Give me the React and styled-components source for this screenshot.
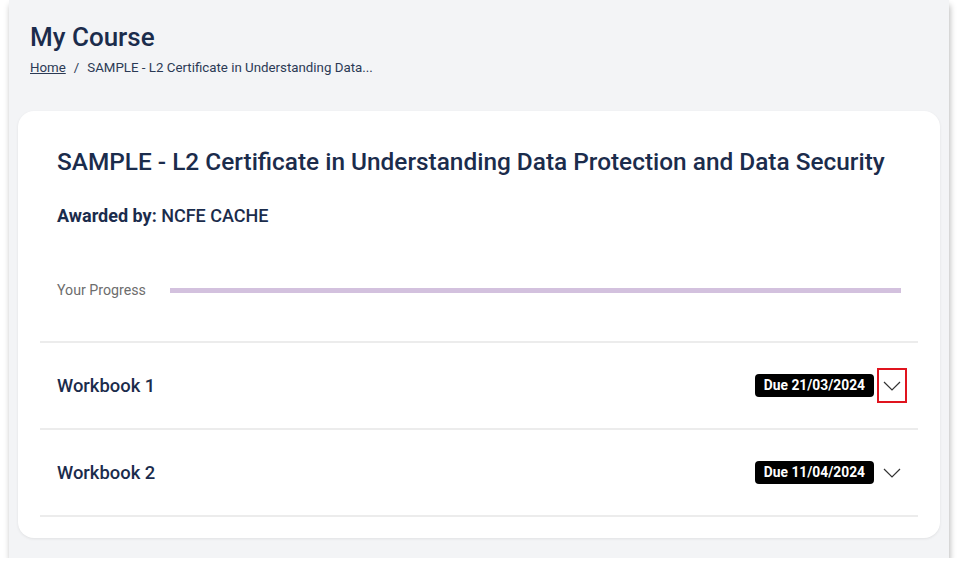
import styled, { createGlobalStyle } from "styled-components";

const Global = createGlobalStyle`
  html, body {
    margin: 0;
    padding: 0;
    background: #fff;
    font-family: Roboto, "Liberation Sans", Arial, sans-serif;
  }
`

const Frame = styled.div`
  margin-left: 9px;
  width: 940px;
  height: 558px;
  box-sizing: border-box;
  background: #f3f4f6;
  box-shadow: 1px 5px 6px rgba(0, 0, 0, 0.28);
  padding: 22px 9px 0 9px;
  display: flex;
  flex-direction: column;
`

const PageTitle = styled.h1`
  margin: 0 0 0 12px;
  font-size: 26px;
  line-height: 30px;
  font-weight: 500;
  color: #1b2c4c;
`

const Crumbs = styled.nav`
  margin: 7px 0 0 12px;
  font-size: 13.3px;
  line-height: 18px;
  color: #2b3a55;
  display: flex;
  gap: 8px;
`

const CrumbLink = styled.a`
  color: #2b3a55;
  text-decoration: underline;
`

const Card = styled.section`
  margin-top: 34px;
  width: 922px;
  height: 427px;
  box-sizing: border-box;
  background: #fff;
  border-radius: 16px;
  box-shadow: 0 1px 3px rgba(0, 0, 0, 0.08);
  padding: 36px 22px 0 22px;
`

const Head = styled.div`
  padding: 0 17px;
`

const CourseTitle = styled.h2`
  margin: 0;
  font-size: 24.4px;
  line-height: 30px;
  font-weight: 500;
  color: #1b2c4c;
`

const Awarded = styled.p`
  margin: 28px 0 0;
  font-size: 18px;
  line-height: 22px;
  font-weight: 500;
  color: #1b2c4c;
  b { font-weight: 700; }
`

const ProgressRow = styled.div`
  margin-top: 53px;
  display: flex;
  align-items: center;
  gap: 24px;
  height: 20px;
`

const ProgressLabel = styled.span`
  font-size: 14.2px;
  color: #6d6d6d;
  white-space: nowrap;
`

const Track = styled.div`
  flex: 1;
  height: 5px;
  background: #d3c1de;
`

const List = styled.div`
  margin-top: 41px;
  border-top: 2px solid #ececec;
`

const Row = styled.div`
  height: 85px;
  border-bottom: 2px solid #ececec;
  display: flex;
  align-items: center;
  padding: 0 11px 0 17px;
`

const RowTitle = styled.span`
  flex: 1;
  font-size: 18.4px;
  font-weight: 500;
  color: #1b2c4c;
`

const Badge = styled.span`
  background: #000;
  color: #fff;
  font-size: 13.8px;
  font-weight: 700;
  line-height: 23px;
  padding: 0 9px;
  border-radius: 4px;
`

const Toggle = styled.button`
  margin-left: 3px;
  width: 30px;
  height: 35px;
  box-sizing: border-box;
  background: none;
  padding: 0;
  display: flex;
  align-items: center;
  justify-content: center;
  border: 2px solid ${p => (p.$focused ? "#e0141e" : "transparent")};
`

function Chevron() {
  return (
    <svg width="18" height="10" viewBox="0 0 18 10">
      <polyline points="1,1 9,9 17,1" fill="none" stroke="#333" strokeWidth="1.2" />
    </svg>
  )
}

const workbooks = [
  { name: "Workbook 1", due: "21/03/2024", focused: true },
  { name: "Workbook 2", due: "11/04/2024", focused: false },
]

export default function App() {
  return <>
    <Global />
    <Frame>
      <PageTitle>My Course</PageTitle>
      <Crumbs>
        <CrumbLink href="#">Home</CrumbLink>
        <span>/</span>
        <span>SAMPLE - L2 Certificate in Understanding Data...</span>
      </Crumbs>
      <Card>
        <Head>
          <CourseTitle>SAMPLE - L2 Certificate in Understanding Data Protection and Data Security</CourseTitle>
          <Awarded><b>Awarded by:</b> NCFE CACHE</Awarded>
          <ProgressRow>
            <ProgressLabel>Your Progress</ProgressLabel>
            <Track />
          </ProgressRow>
        </Head>
        <List>
          {workbooks.map(w => (
            <Row key={w.name}>
              <RowTitle>{w.name}</RowTitle>
              <Badge>Due {w.due}</Badge>
              <Toggle $focused={w.focused}><Chevron /></Toggle>
            </Row>
          ))}
        </List>
      </Card>
    </Frame>
  </>
}
